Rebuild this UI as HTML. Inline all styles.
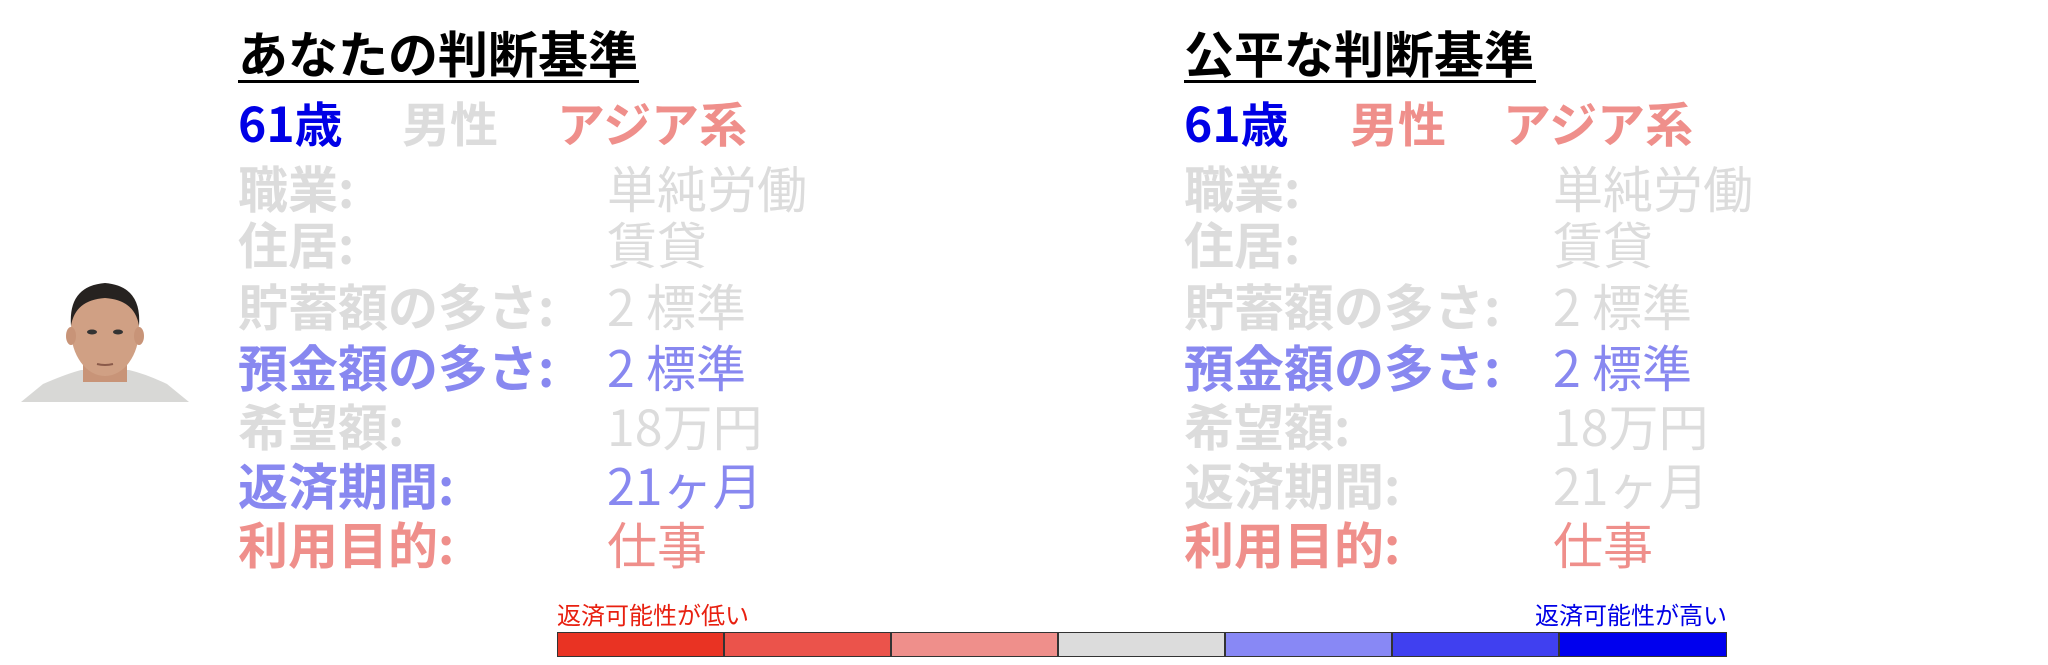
<!DOCTYPE html>
<html><head><meta charset="utf-8"><style>
body{margin:0;width:2048px;height:665px;background:#fff;position:relative;overflow:hidden;font-family:"Noto Sans CJK JP","Liberation Sans",sans-serif}
.a{position:absolute;white-space:nowrap;line-height:1}
.t{font-size:50px;font-weight:bold;color:#000;top:27px}
.u{position:absolute;height:3px;background:#000;top:80px}
.h{font-size:48px;font-weight:bold;top:97px}
.l{font-size:50px;font-weight:bold}
.v{font-size:50px;font-weight:normal}
.g{color:#dcdcdc}.b{color:#8888f0}.r{color:#ef8f8b}.B{color:#0000e6}
.seg{position:absolute;top:632px;height:25px;width:167px;box-sizing:border-box;border:1px solid #333}
</style></head><body>
<div class="a t" style="left:238px">あなたの判断基準</div><div class="u" style="left:238px;width:401px"></div>
<div class="a t" style="left:1184px">公平な判断基準</div><div class="u" style="left:1184px;width:352px"></div>

<div class="a h B" style="left:238px">61歳</div>
<div class="a h g" style="left:402px">男性</div>
<div class="a h r" style="left:557px">アジア系</div>
<div class="a h B" style="left:1184px">61歳</div>
<div class="a h r" style="left:1350px">男性</div>
<div class="a h r" style="left:1503px">アジア系</div>

<div class="a l g" style="left:238px;top:162px">職業:</div><div class="a v g" style="left:607px;top:162px">単純労働</div>
<div class="a l g" style="left:238px;top:218px">住居:</div><div class="a v g" style="left:607px;top:218px">賃貸</div>
<div class="a l g" style="left:238px;top:280px">貯蓄額の多さ:</div><div class="a v g" style="left:607px;top:280px">2 標準</div>
<div class="a l b" style="left:238px;top:341px">預金額の多さ:</div><div class="a v b" style="left:607px;top:341px">2 標準</div>
<div class="a l g" style="left:238px;top:400px">希望額:</div><div class="a v g" style="left:607px;top:400px">18万円</div>
<div class="a l b" style="left:238px;top:459px">返済期間:</div><div class="a v b" style="left:607px;top:459px">21ヶ月</div>
<div class="a l r" style="left:238px;top:518px">利用目的:</div><div class="a v r" style="left:607px;top:518px">仕事</div>

<div class="a l g" style="left:1184px;top:162px">職業:</div><div class="a v g" style="left:1553px;top:162px">単純労働</div>
<div class="a l g" style="left:1184px;top:218px">住居:</div><div class="a v g" style="left:1553px;top:218px">賃貸</div>
<div class="a l g" style="left:1184px;top:280px">貯蓄額の多さ:</div><div class="a v g" style="left:1553px;top:280px">2 標準</div>
<div class="a l b" style="left:1184px;top:341px">預金額の多さ:</div><div class="a v b" style="left:1553px;top:341px">2 標準</div>
<div class="a l g" style="left:1184px;top:400px">希望額:</div><div class="a v g" style="left:1553px;top:400px">18万円</div>
<div class="a l g" style="left:1184px;top:459px">返済期間:</div><div class="a v g" style="left:1553px;top:459px">21ヶ月</div>
<div class="a l r" style="left:1184px;top:518px">利用目的:</div><div class="a v r" style="left:1553px;top:518px">仕事</div>

<svg style="position:absolute;left:21px;top:278px" width="168" height="125" viewBox="0 0 168 125">
<path d="M0 124 L22 106 Q45 96 60 92 L108 92 Q125 96 146 106 L168 124 Z" fill="#d8d8d6"/>
<rect x="62" y="70" width="44" height="34" fill="#c89478"/>
<ellipse cx="84" cy="52" rx="34" ry="46" fill="#d0a084"/>
<ellipse cx="50" cy="58" rx="5" ry="9" fill="#c89478"/><ellipse cx="118" cy="58" rx="5" ry="9" fill="#c89478"/>
<path d="M50 48 Q47 8 84 5 Q121 8 118 48 Q114 22 84 20 Q54 22 50 48Z" fill="#262220"/>
<ellipse cx="71" cy="54" rx="5" ry="2.5" fill="#333"/><ellipse cx="97" cy="54" rx="5" ry="2.5" fill="#333"/>
<path d="M76 86 Q84 88 92 86" stroke="#8a5a4a" stroke-width="2" fill="none"/>
</svg>

<div class="a" style="left:557px;top:602px;font-size:24px;color:#e82010">返済可能性が低い</div>
<div class="a" style="left:1727px;top:602px;font-size:24px;color:#0000e6;transform:translateX(-100%)">返済可能性が高い</div>
<div class="seg" style="left:557px;background:#e93323"></div>
<div class="seg" style="left:724px;background:#eb534b"></div>
<div class="seg" style="left:891px;background:#ef8f8b"></div>
<div class="seg" style="left:1058px;background:#dcdcdc"></div>
<div class="seg" style="left:1225px;background:#8888f5"></div>
<div class="seg" style="left:1392px;background:#4040f0"></div>
<div class="seg" style="left:1559px;width:168px;background:#0000ee"></div>
</body></html>
